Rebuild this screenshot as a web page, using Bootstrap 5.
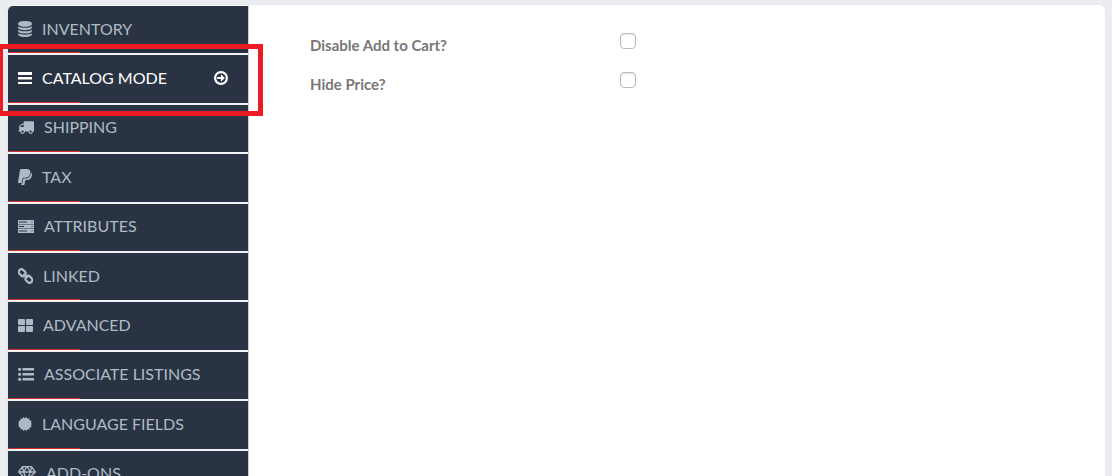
<!DOCTYPE html>
<html lang="en">
<head>
<meta charset="utf-8">
<meta name="viewport" content="width=device-width, initial-scale=1">
<title>Catalog Mode</title>
<link href="https://cdn.jsdelivr.net/npm/bootstrap@5.3.0/dist/css/bootstrap.min.css" rel="stylesheet">
<style>
  body { background: #ecedf1; font-family: Lato, "Liberation Sans", sans-serif; }
  .page { padding: 5px 7px 0 8px; }
  .panel { background: #fff; border-radius: 6px; box-shadow: 0 0 2px #dcdde2; }
  .side { width: 241px; border-right: 1px solid #ccc; padding-top: 1px; }
  .tabs { display: grid; grid-auto-rows: 1fr; min-height: 494px; }
  .tab-row { border-bottom: 2px solid #f2f1f5; background: #2a3343; }
  .tab-row:first-child { border-top-left-radius: 5px; }
  .tab-link { color: #adbcc4; font-size: 16px; line-height: 24px; padding: 0 20px 2px 10px; gap: 10px; }
  .tab-link:hover { color: #fff; }
  .tab-link.active { color: #fff; }
  .tab-link svg { height: 16px; fill: currentColor; flex: none; }
  .tab-link::after { content: ""; position: absolute; left: 0; bottom: 0; width: 72px; height: 1px; background: #d9302f; }
  .highlight { position: absolute; inset: -11px -15px -13px -10px; border: 5px solid #ed1c24; z-index: 2; pointer-events: none; }
  .settings { padding: 28px 24px 0 61px; }
  .setting { height: 39px; }
  .setting label { width: 310px; padding-top: 1px; color: #777; font-size: 15px; line-height: 22px; font-weight: 700; }
  .setting .form-check-input { width: 16px; height: 16px; margin: 0; border: 1px solid #bbb; border-radius: 4px; box-shadow: inset 0 1px 2px #e4e4e4; }
</style>
</head>
<body>
<div class="page vh-100 overflow-hidden">
  <div class="panel d-flex">
    <nav class="side flex-shrink-0" aria-label="Listing sections">
      <ul class="tabs list-unstyled mb-0">
        <li class="tab-row position-relative"><a href="#inventory" class="tab-link d-flex align-items-center h-100 text-decoration-none">
          <svg width="14" viewBox="128 0 1536 1792" aria-hidden="true"><path d="M896 768q237 0 443-43t325-127v170q0 69-103 128t-280 93.500-385 34.500-385-34.500-280-93.500-103-128v-170q119 84 325 127t443 43zm0 768q237 0 443-43t325-127v170q0 69-103 128t-280 93.500-385 34.500-385-34.500-280-93.500-103-128v-170q119 84 325 127t443 43zm0-384q237 0 443-43t325-127v170q0 69-103 128t-280 93.500-385 34.500-385-34.500-280-93.500-103-128v-170q119 84 325 127t443 43zm0-1152q208 0 385 34.500t280 93.500 103 128v128q0 69-103 128t-280 93.500-385 34.500-385-34.500-280-93.500-103-128v-128q0-69 103-128t280-93.500 385-34.500z"/></svg>
          <span>INVENTORY</span></a></li>
        <li class="tab-row position-relative"><a href="#catalog" class="tab-link active d-flex align-items-center h-100 text-decoration-none" aria-current="page">
          <svg width="14" viewBox="0 0 14 16" aria-hidden="true"><path d="M.5 2h13a.5.5 0 0 1 .5.500V5H0V2.500A.5.5 0 0 1 .5 2zM0 7h14v2.500H0zM0 12h14v1.500a.5.5 0 0 1-.5.500H.5a.5.5 0 0 1-.5-.5z"/></svg>
          <span>CATALOG MODE</span>
          <svg class="ms-auto" width="14" viewBox="0 0 14 16" aria-hidden="true"><circle cx="7" cy="8" r="5.900" fill="none" stroke="currentColor" stroke-width="2.200"/><path d="M3.200 6.900h3.700V4.300L10.900 8l-4 3.700V9.100H3.200z"/></svg></a>
          <span class="highlight"></span></li>
        <li class="tab-row position-relative"><a href="#shipping" class="tab-link d-flex align-items-center h-100 text-decoration-none">
          <svg width="16" viewBox="0 0 1792 1792" aria-hidden="true"><path d="M640 1408q0-52-38-90t-90-38-90 38-38 90 38 90 90 38 90-38 38-90zm-384-512h384v-256h-158q-13 0-22 9l-195 195q-9 9-9 22v30zm1280 512q0-52-38-90t-90-38-90 38-38 90 38 90 90 38 90-38 38-90zm256-1088v1024q0 15-4 26.500t-13.500 18.500-16.500 11.500-23.500 6-22.500 2-25.500 0-22.500-.5q0 106-75 181t-181 75-181-75-75-181h-384q0 106-75 181t-181 75-181-75-75-181h-64q-3 0-22.500.5t-25.500 0-22.500-2-23.500-6-16.500-11.500-13.500-18.500-4-26.500q0-26 19-45t45-19v-320q0-8-.5-35t0-38 2.500-34.500 6.500-37 14-30.500 22.500-30l198-198q19-19 50.500-32t58.500-13h160v-192q0-26 19-45t45-19h1024q26 0 45 19t19 45z"/></svg>
          <span>SHIPPING</span></a></li>
        <li class="tab-row position-relative"><a href="#tax" class="tab-link d-flex align-items-center h-100 text-decoration-none">
          <svg width="14" viewBox="0 0 14 16" aria-hidden="true"><path d="M2.800 0h5.900c2.600 0 4 1.400 3.600 3.900-.6 3.300-2.600 4.900-5.600 4.900H5.500c-.6 0-.9.300-1 .9L3.700 14H.4c-.3 0-.4-.2-.4-.5L2.100.6c.1-.4.300-.6.7-.6z"/><path d="M13 3.500c1 .8 1.200 1.900.9 3.200-.6 2.800-2.300 4.200-5 4.200H8c-.5 0-.7.200-.8.700l-.6 3.700c-.1.400-.3.700-.8.700H3.500c-.3 0-.5-.2-.4-.5l.2-1h1l.9-4.200c.1-.4.300-.7.800-.7h1.100c3.400 0 5.400-2.100 5.900-6.100z"/></svg>
          <span>TAX</span></a></li>
        <li class="tab-row position-relative"><a href="#attributes" class="tab-link d-flex align-items-center h-100 text-decoration-none">
          <svg width="16" viewBox="0 0 16 16" aria-hidden="true"><path fill-rule="evenodd" d="M0 2h16v4H0zM1 3.500v1h8v-1zm12.500 0v1h1v-1zM0 6.500h16v4H0zm1 1.500v1h5V8zm12.500 0v1h1V8zM0 11h16v4H0zm1 1.500v1h8v-1zm12.500 0v1h1v-1z"/></svg>
          <span>ATTRIBUTES</span></a></li>
        <li class="tab-row position-relative"><a href="#linked" class="tab-link d-flex align-items-center h-100 text-decoration-none">
          <svg width="15" viewBox="0 0 15 16" aria-hidden="true"><g transform="rotate(45 7.500 8)" fill="none" stroke="currentColor" stroke-width="2.200"><rect x="-.9" y="5.300" width="7.300" height="5.400" rx="2.500"/><rect x="8.600" y="5.300" width="7.300" height="5.400" rx="2.500"/><path d="M4.600 8h5.800"/></g></svg>
          <span>LINKED</span></a></li>
        <li class="tab-row position-relative"><a href="#advanced" class="tab-link d-flex align-items-center h-100 text-decoration-none">
          <svg width="15" viewBox="0 0 15 16" aria-hidden="true"><rect y="2" width="7" height="6" rx="1"/><rect x="8" y="2" width="7" height="6" rx="1"/><rect y="9" width="7" height="6" rx="1"/><rect x="8" y="9" width="7" height="6" rx="1"/></svg>
          <span>ADVANCED</span></a></li>
        <li class="tab-row position-relative"><a href="#associate" class="tab-link d-flex align-items-center h-100 text-decoration-none">
          <svg width="16" viewBox="0 0 16 16" aria-hidden="true"><circle cx="1.600" cy="3.300" r="1.600"/><circle cx="1.600" cy="8.300" r="1.600"/><circle cx="1.600" cy="13.300" r="1.600"/><path d="M4.500 2H16v2.500H4.500zM4.500 7H16v2.500H4.500zM4.500 12H16v2.500H4.500z"/></svg>
          <span>ASSOCIATE LISTINGS</span></a></li>
        <li class="tab-row position-relative"><a href="#language" class="tab-link d-flex align-items-center h-100 text-decoration-none">
          <svg width="14" viewBox="0 0 14 16" aria-hidden="true"><path d="M7 2.200 8.600 1l.9 1.800 2-.3.100 2 2 .4-.7 1.900L14 8l-1.100 1.200.7 1.900-2 .4-.1 2-2-.3L8.600 15 7 13.800 5.400 15l-.9-1.800-2 .3-.1-2-2-.4.700-1.900L0 8l1.100-1.200-.7-1.900 2-.4.100-2 2 .3L5.400 1z"/></svg>
          <span>LANGUAGE FIELDS</span></a></li>
        <li class="tab-row position-relative"><a href="#addons" class="tab-link d-flex align-items-center h-100 text-decoration-none">
          <svg width="18" viewBox="0 0 18 16" aria-hidden="true"><path fill="none" stroke="currentColor" stroke-width="1.300" stroke-linejoin="round" d="M4.500 1.700h9L17.300 7 9 15 .7 7zM.7 7h16.600M9 1.700 5.500 7 9 15l3.500-8zM4.500 1.700l1 5.300M13.500 1.700l-1 5.300"/></svg>
          <span>ADD-ONS</span></a></li>
      </ul>
    </nav>
    <main class="flex-grow-1">
      <form class="settings">
        <div class="setting d-flex align-items-start">
          <label for="disable-cart">Disable Add to Cart?</label>
          <input class="form-check-input" type="checkbox" id="disable-cart">
        </div>
        <div class="setting d-flex align-items-start">
          <label for="hide-price">Hide Price?</label>
          <input class="form-check-input" type="checkbox" id="hide-price">
        </div>
      </form>
    </main>
  </div>
</div>
<script src="https://cdn.jsdelivr.net/npm/bootstrap@5.3.0/dist/js/bootstrap.bundle.min.js"></script>
</body>
</html>
